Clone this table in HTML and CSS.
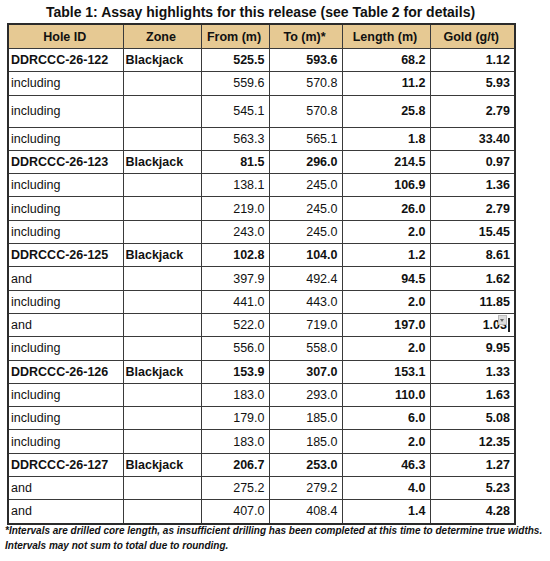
FILE: index.html
```html
<!DOCTYPE html>
<html lang="en">
<head>
    <meta charset="UTF-8">
    <title>Assay highlights</title>
    <link rel="stylesheet" href="styles.css">
</head>
<body>
    <div class="sheet">
        <h1 class="caption">Table 1: Assay highlights for this release (see Table 2 for details)</h1>
        <table class="assay">
            <colgroup>
                <col class="c-hole">
                <col class="c-zone">
                <col class="c-from">
                <col class="c-to">
                <col class="c-len">
                <col class="c-gold">
            </colgroup>
            <thead>
                <tr>
                    <th>Hole ID</th>
                    <th>Zone</th>
                    <th>From (m)</th>
                    <th>To (m)*</th>
                    <th>Length (m)</th>
                    <th>Gold (g/t)</th>
                </tr>
            </thead>
            <tbody>
                <tr class="hole"><td>DDRCCC-26-122</td><td>Blackjack</td><td>525.5</td><td>593.6</td><td>68.2</td><td>1.12</td></tr>
                <tr><td>including</td><td></td><td>559.6</td><td>570.8</td><td>11.2</td><td>5.93</td></tr>
                <tr class="tall"><td>including</td><td></td><td>545.1</td><td>570.8</td><td>25.8</td><td>2.79</td></tr>
                <tr><td>including</td><td></td><td>563.3</td><td>565.1</td><td>1.8</td><td>33.40</td></tr>
                <tr class="hole"><td>DDRCCC-26-123</td><td>Blackjack</td><td>81.5</td><td>296.0</td><td>214.5</td><td>0.97</td></tr>
                <tr><td>including</td><td></td><td>138.1</td><td>245.0</td><td>106.9</td><td>1.36</td></tr>
                <tr><td>including</td><td></td><td>219.0</td><td>245.0</td><td>26.0</td><td>2.79</td></tr>
                <tr><td>including</td><td></td><td>243.0</td><td>245.0</td><td>2.0</td><td>15.45</td></tr>
                <tr class="hole"><td>DDRCCC-26-125</td><td>Blackjack</td><td>102.8</td><td>104.0</td><td>1.2</td><td>8.61</td></tr>
                <tr><td>and</td><td></td><td>397.9</td><td>492.4</td><td>94.5</td><td>1.62</td></tr>
                <tr><td>including</td><td></td><td>441.0</td><td>443.0</td><td>2.0</td><td>11.85</td></tr>
                <tr><td>and</td><td></td><td>522.0</td><td>719.0</td><td>197.0</td><td><span class="cell-edit">1.03<span class="dropdown"></span></span></td></tr>
                <tr><td>including</td><td></td><td>556.0</td><td>558.0</td><td>2.0</td><td>9.95</td></tr>
                <tr class="hole"><td>DDRCCC-26-126</td><td>Blackjack</td><td>153.9</td><td>307.0</td><td>153.1</td><td>1.33</td></tr>
                <tr><td>including</td><td></td><td>183.0</td><td>293.0</td><td>110.0</td><td>1.63</td></tr>
                <tr><td>including</td><td></td><td>179.0</td><td>185.0</td><td>6.0</td><td>5.08</td></tr>
                <tr><td>including</td><td></td><td>183.0</td><td>185.0</td><td>2.0</td><td>12.35</td></tr>
                <tr class="hole"><td>DDRCCC-26-127</td><td>Blackjack</td><td>206.7</td><td>253.0</td><td>46.3</td><td>1.27</td></tr>
                <tr><td>and</td><td></td><td>275.2</td><td>279.2</td><td>4.0</td><td>5.23</td></tr>
                <tr><td>and</td><td></td><td>407.0</td><td>408.4</td><td>1.4</td><td>4.28</td></tr>
            </tbody>
        </table>
        <p class="note">*Intervals are drilled core length, as insufficient drilling has been completed at this time to determine true widths.<br>Intervals may not sum to total due to rounding.</p>
    </div>
</body>
</html>
```

FILE: styles.css
```css
body {
    margin: 0;
    background-color: #fff;
    color: #111;
    font-family: "Liberation Sans", Arial, sans-serif;
}
.sheet {
    padding: 4px 0 0 7px;
    width: 507px;
}
.caption {
    margin: 0 0 3px;
    font-size: 14px;
    line-height: 16px;
    text-align: center;
}
.assay {
    border-collapse: collapse;
    table-layout: fixed;
    width: 507px;
    font-size: 12.5px;
    border: 2px solid #2b2b2b;
}
.c-hole { width: 115px; }
.c-zone { width: 78px; }
.c-from { width: 68px; }
.c-to { width: 73px; }
.c-len { width: 88px; }
.c-gold { width: 85px; }
.assay th,
.assay td {
    border: 1px solid #3a3a3a;
    padding: 0 4px 0 2px;
    height: 22.3px;
    white-space: nowrap;
    text-align: right;
}
.assay th {
    background-color: #e6c993;
    text-align: center;
    height: 23px;
}
.assay td:nth-child(1),
.assay td:nth-child(2) {
    text-align: left;
}
.assay td:nth-child(5),
.assay td:nth-child(6) {
    font-weight: bold;
}
.hole td {
    font-weight: bold;
}
.tall td {
    height: 31px;
}
.cell-edit {
    position: relative;
    padding-right: 1px;
    border-right: 2px solid #222;
}
.dropdown {
    position: absolute;
    right: 1px;
    top: -3px;
    width: 7px;
    height: 8px;
    background-color: #ddd;
    border: 1px solid #bbb;
}
.dropdown::after {
    content: "";
    position: absolute;
    left: 1px;
    top: 3px;
    border-left: 2.5px solid transparent;
    border-right: 2.5px solid transparent;
    border-top: 3px solid #666;
}
.note {
    margin: -2px 0 0 -2px;
    width: 545px;
    font-size: 10px;
    line-height: 15px;
    white-space: nowrap;
    font-weight: bold;
    font-style: italic;
}
```
